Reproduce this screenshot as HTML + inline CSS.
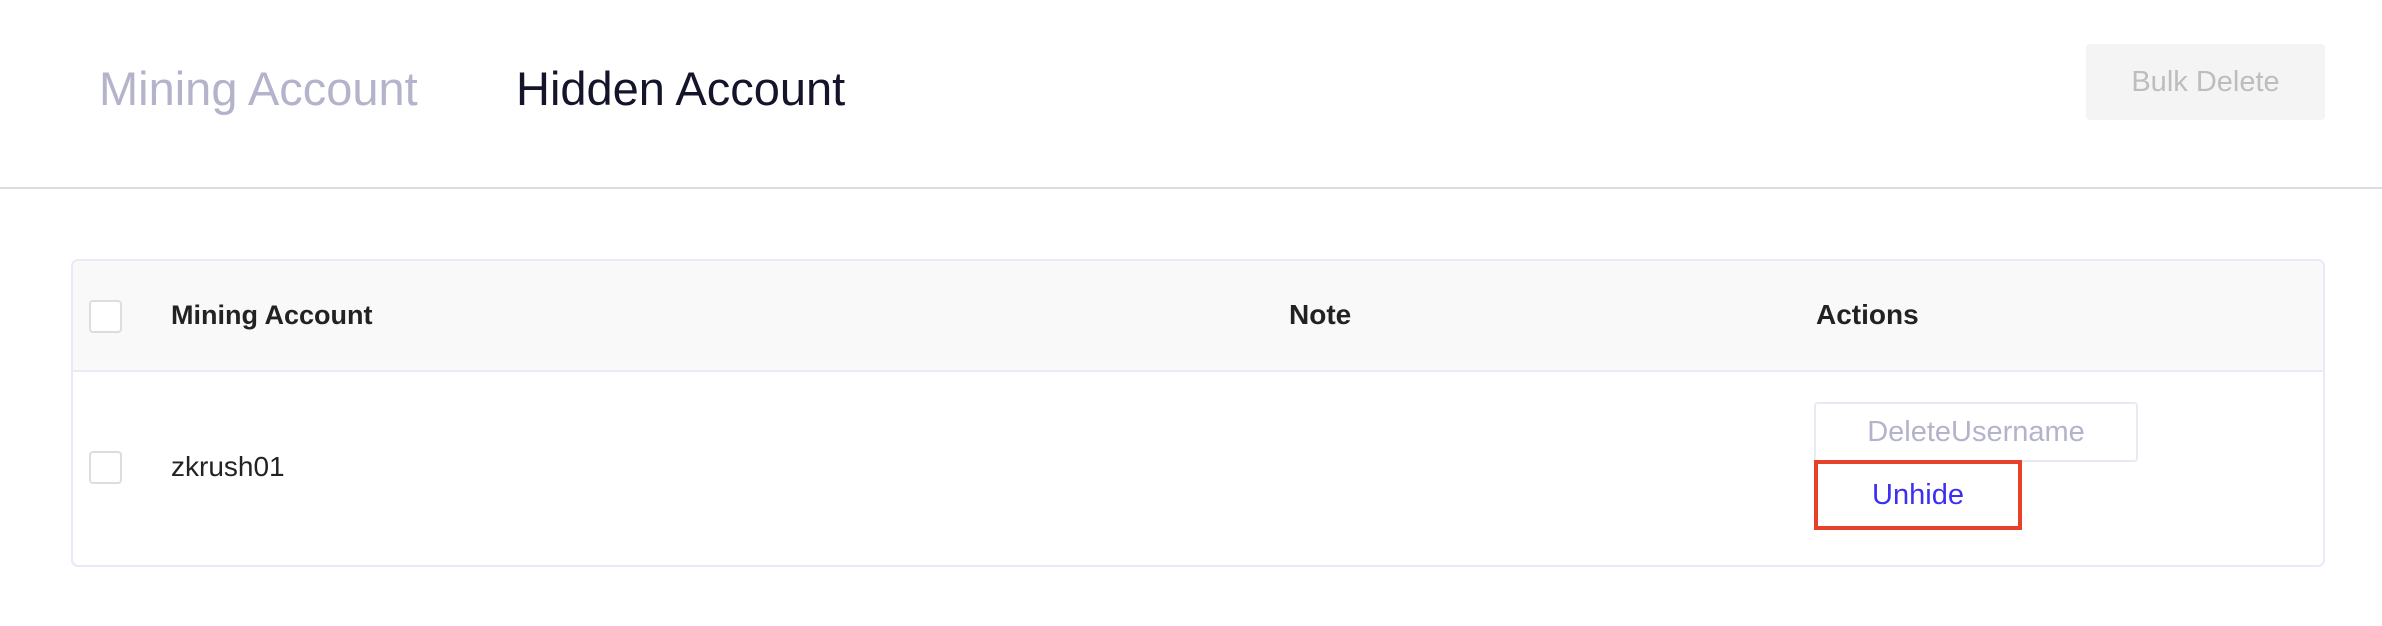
<!DOCTYPE html>
<html><head><style>
body{margin:0;width:2382px;height:626px;background:#fff;font-family:"Liberation Sans",sans-serif;position:relative;overflow:hidden}
.a{position:absolute;white-space:nowrap}
</style></head><body>
<div class="a" style="left:99px;top:59px;font-size:47px;line-height:60px;color:#b3b3cb">Mining Account</div>
<div class="a" style="left:516px;top:59px;font-size:47px;line-height:60px;color:#14142b">Hidden Account</div>
<div class="a" style="left:2086px;top:44px;width:239px;height:76px;background:#f4f4f4;border-radius:4px;color:#bdbdbd;font-size:29px;line-height:76px;text-align:center">Bulk Delete</div>
<div class="a" style="left:0;top:187px;width:2382px;height:2px;background:#dcdce2"></div>
<div class="a" style="left:71px;top:259px;width:2250px;height:304px;border:2px solid #e8eafa;border-radius:7px;overflow:hidden">
  <div style="position:absolute;left:0;top:0;width:100%;height:109px;background:#f9f9f9;border-bottom:2px solid #e8eafa"></div>
  <div class="a" style="left:16px;top:39px;width:29px;height:29px;border:2px solid #ddd;border-radius:4px;background:#fff"></div>
  <div class="a" style="left:98px;top:38px;font-size:27px;font-weight:bold;line-height:32px;color:#222">Mining Account</div>
  <div class="a" style="left:1216px;top:38px;font-size:28px;font-weight:bold;line-height:32px;color:#222">Note</div>
  <div class="a" style="left:1743px;top:38px;font-size:28px;font-weight:bold;line-height:32px;color:#222">Actions</div>
  <div class="a" style="left:16px;top:190px;width:29px;height:29px;border:2px solid #ddd;border-radius:4px;background:#fff"></div>
  <div class="a" style="left:98px;top:190px;font-size:28px;line-height:32px;color:#222">zkrush01</div>
  <div class="a" style="left:1741px;top:141px;width:320px;height:56px;border:2px solid #e8eaf2;border-radius:4px;color:#b3b3cb;font-size:29px;line-height:56px;text-align:center">DeleteUsername</div>
  <div class="a" style="left:1741px;top:199px;width:208px;height:70px;border:4px solid #e8412a;box-sizing:border-box;color:#3b2ff2;font-size:29px;line-height:62px;text-align:center">Unhide</div>
</div>
</body></html>
